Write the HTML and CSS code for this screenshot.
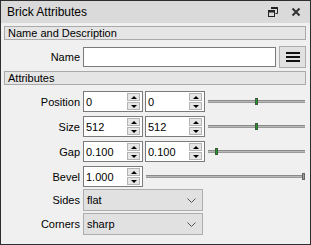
FILE: index.html
```html
<!DOCTYPE html>
<html lang="en">
<head>
    <meta charset="UTF-8">
    <title>Brick Attributes</title>
    <link rel="stylesheet" href="styles.css">
</head>
<body>
    <div class="dock">
        <div class="title-bar">
            <span class="title">Brick Attributes</span>
            <span class="title-btn">
                <svg width="10" height="10" viewBox="0 0 10 10">
                    <path d="M3.5 0.5h6v6h-2" fill="none" stroke="#222" stroke-width="1"/>
                    <path d="M3 1h6.5" stroke="#222" stroke-width="2"/>
                    <rect x="0.5" y="3.5" width="6" height="6" fill="none" stroke="#222"/>
                    <path d="M0 4.5h7" stroke="#222" stroke-width="2"/>
                </svg>
            </span>
            <span class="title-btn">
                <svg width="10" height="10" viewBox="0 0 10 10">
                    <path d="M1.5 1.5l7 7M8.5 1.5l-7 7" stroke="#333" stroke-width="2"/>
                </svg>
            </span>
        </div>
        <div class="content">
            <div class="group-head">Name and Description</div>
            <div class="row name-row">
                <label class="label">Name</label>
                <input class="text-field" type="text">
                <button class="menu-btn" type="button">
                    <svg width="14" height="12" viewBox="0 0 14 12">
                        <path d="M0 2h14M0 6h14M0 10h14" stroke="#111" stroke-width="2"/>
                    </svg>
                </button>
            </div>

            <div class="group-head attr-head">Attributes</div>
            <div class="row">
                <label class="label">Position</label>
                <div class="spin"><span class="spin-value">0</span><span class="spin-btns"><i class="up"></i><i class="down"></i></span></div>
                <div class="spin"><span class="spin-value">0</span><span class="spin-btns"><i class="up"></i><i class="down"></i></span></div>
                <div class="slider"><div class="groove"></div><div class="handle" style="left: 50%"></div></div>
            </div>
            <div class="row">
                <label class="label">Size</label>
                <div class="spin"><span class="spin-value">512</span><span class="spin-btns"><i class="up"></i><i class="down"></i></span></div>
                <div class="spin"><span class="spin-value">512</span><span class="spin-btns"><i class="up"></i><i class="down"></i></span></div>
                <div class="slider"><div class="groove"></div><div class="handle" style="left: 50%"></div></div>
            </div>
            <div class="row">
                <label class="label">Gap</label>
                <div class="spin"><span class="spin-value">0.100</span><span class="spin-btns"><i class="up"></i><i class="down"></i></span></div>
                <div class="spin"><span class="spin-value">0.100</span><span class="spin-btns"><i class="up"></i><i class="down"></i></span></div>
                <div class="slider"><div class="groove"></div><div class="handle" style="left: 9%"></div></div>
            </div>
            <div class="row">
                <label class="label">Bevel</label>
                <div class="spin"><span class="spin-value">1.000</span><span class="spin-btns"><i class="up"></i><i class="down"></i></span></div>
                <div class="slider"><div class="groove"></div><div class="handle grey" style="left: 100%"></div></div>
            </div>
            <div class="row combo-row">
                <label class="label">Sides</label>
                <div class="combo"><span>flat</span>
                    <svg width="9" height="5" viewBox="0 0 9 5"><path d="M0.5 0.5l4 4 4-4" fill="none" stroke="#555"/></svg>
                </div>
            </div>
            <div class="row combo-row">
                <label class="label">Corners</label>
                <div class="combo"><span>sharp</span>
                    <svg width="9" height="5" viewBox="0 0 9 5"><path d="M0.5 0.5l4 4 4-4" fill="none" stroke="#555"/></svg>
                </div>
            </div>
        </div>
    </div>
</body>
</html>
```

FILE: styles.css
```css
body {
    margin: 0;
    font-family: "Liberation Sans", Arial, sans-serif;
    font-size: 11px;
    color: #000;
}

.dock {
    width: 311px;
    height: 245px;
    box-sizing: border-box;
    border: 1px solid #2e2e2e;
    background-color: #f0f0f0;
}

.title-bar {
    height: 22px;
    display: flex;
    align-items: center;
    background-color: #dadada;
    padding-left: 6px;
    padding-right: 3px;
}

.title {
    flex: 1;
    font-size: 12px;
}

.title-btn {
    width: 23px;
    display: flex;
    justify-content: center;
}

.content {
    padding: 3px 4px 0 3px;
}

.group-head {
    height: 14px;
    box-sizing: border-box;
    border: 1px solid #a9a9a9;
    background-color: #e5e5e5;
    line-height: 12px;
    padding-left: 3px;
}

.attr-head {
    margin-top: 3px;
}

.row {
    display: flex;
    align-items: center;
    height: 21px;
    margin-top: 4px;
}

.name-row {
    height: 22px;
    margin-top: 6px;
}

.attr-head + .row {
    margin-top: 6px;
}

.label {
    width: 76px;
    text-align: right;
    margin-right: 3px;
}

.text-field {
    flex: 1;
    height: 20px;
    box-sizing: border-box;
    border: 1px solid #7a7a7a;
    margin: 0;
    padding: 0 3px;
    outline: none;
}

.menu-btn {
    width: 27px;
    height: 22px;
    margin: 0 0 0 3px;
    padding: 0;
    border: 1px solid #adadad;
    background-color: #e1e1e1;
    display: flex;
    align-items: center;
    justify-content: center;
}

.spin {
    width: 60px;
    height: 21px;
    box-sizing: border-box;
    border: 1px solid #7a7a7a;
    background-color: #fff;
    display: flex;
    align-items: center;
    margin-right: 2px;
}

.spin-value {
    flex: 1;
    padding-left: 2px;
}

.spin-btns {
    width: 13px;
    height: 17px;
    margin-right: 2px;
    display: flex;
    flex-direction: column;
    gap: 1px;
}

.spin-btns i {
    flex: 1;
    border: 1px solid #b4b4b4;
    background-color: #e6e6e6;
    display: flex;
    align-items: center;
    justify-content: center;
}

.spin-btns i::after {
    content: "";
    border-left: 3px solid transparent;
    border-right: 3px solid transparent;
}

.spin-btns .up::after {
    border-bottom: 3px solid #000;
}

.spin-btns .down::after {
    border-top: 3px solid #000;
}

.slider {
    flex: 1;
    height: 21px;
    position: relative;
    margin-left: 1px;
    margin-right: 1px;
}

.groove {
    position: absolute;
    left: 0;
    right: 0;
    top: 9px;
    height: 3px;
    box-sizing: border-box;
    background-color: #b8b8b8;
    border-top: 1px solid #8a8a8a;
    border-bottom: 1px solid #9a9a9a;
}

.handle {
    position: absolute;
    top: 7px;
    width: 3px;
    height: 7px;
    margin-left: -2px;
    box-sizing: border-box;
    background-color: #1e9b2a;
    border: 1px solid #3a5a3a;
}

.handle.grey {
    margin-left: -3px;
    background-color: #9a9a9a;
    border-color: #666;
}

.combo-row {
    height: 22px;
    margin-top: 2px;
}

.combo {
    width: 120px;
    height: 22px;
    box-sizing: border-box;
    border: 1px solid #adadad;
    background-color: #e1e1e1;
    display: flex;
    align-items: center;
    justify-content: space-between;
    padding: 0 6px 0 3px;
}
```
